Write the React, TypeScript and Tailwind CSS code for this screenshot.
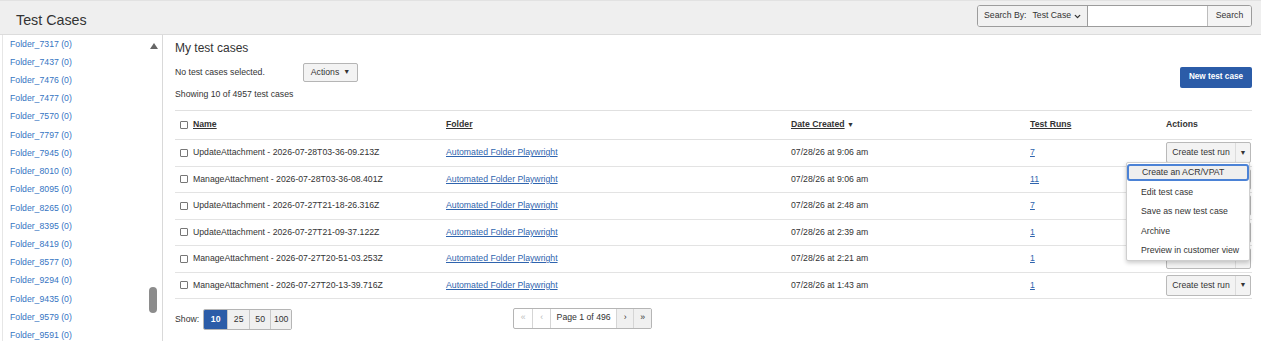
import { ChevronDown } from "lucide-react"

const folders = [
  "7317", "7437", "7476", "7477", "7570", "7797", "7945", "8010", "8095",
  "8265", "8395", "8419", "8577", "9294", "9435", "9579", "9591",
]

const rows = [
  { name: "UpdateAttachment - 2026-07-28T03-36-09.213Z", date: "07/28/26 at 9:06 am", runs: "7" },
  { name: "ManageAttachment - 2026-07-28T03-36-08.401Z", date: "07/28/26 at 9:06 am", runs: "11" },
  { name: "UpdateAttachment - 2026-07-27T21-18-26.316Z", date: "07/28/26 at 2:48 am", runs: "7" },
  { name: "UpdateAttachment - 2026-07-27T21-09-37.122Z", date: "07/28/26 at 2:39 am", runs: "1" },
  { name: "ManageAttachment - 2026-07-27T20-51-03.253Z", date: "07/28/26 at 2:21 am", runs: "1" },
  { name: "ManageAttachment - 2026-07-27T20-13-39.716Z", date: "07/28/26 at 1:43 am", runs: "1" },
]

const cols = "grid grid-cols-[265px_345px_239px_136px_92px]"

function Checkbox() {
  return <span className="inline-block w-[8px] h-[8px] border border-[#777] rounded-[1px] bg-white shrink-0" />
}

function CreateRunButton({ open }: { open?: boolean }) {
  return (
    <div className="relative flex h-[21px] w-[85px] border border-[#b9b9b9] rounded-[2px] bg-[#f3f3f3]">
      <span className="flex-1 flex items-center justify-center">Create test run</span>
      <span className="w-[15px] flex items-center justify-center border-l border-[#dcdcdc] text-[7px]">▼</span>
      {open && <ActionsMenu />}
    </div>
  )
}

function ActionsMenu() {
  return (
    <div className="absolute right-0 top-full z-10 w-[124px] h-[99px] bg-white border border-[#cfcfcf] rounded-[2px] shadow-[0_2px_4px_rgba(0,0,0,0.2)]">
      <div className="h-[17px] mt-[1px] flex items-center pl-[13px] bg-[#efefef] border-2 border-[#4b82d6] rounded-[3px]">
        Create an ACR/VPAT
      </div>
      <div className="h-[19.6px] mt-[1px] flex items-center pl-[14px]">Edit test case</div>
      <div className="h-[19.6px] flex items-center pl-[14px]">Save as new test case</div>
      <div className="h-[19.6px] flex items-center pl-[14px]">Archive</div>
      <div className="h-[19.6px] flex items-center pl-[14px]">Preview in customer view</div>
    </div>
  )
}

export default function App() {
  return (
    <div className="w-[1261px] h-[341px] overflow-hidden bg-white text-[#333] text-[8.7px] font-['Liberation_Sans',Arial,sans-serif]">
      {/* header */}
      <div className="h-[35px] bg-[#efefef] border-t border-t-[#e2e2e2] border-b border-[#dcdcdc] flex items-start justify-between pl-[16px] pr-[9px]">
        <div className="text-[14.3px] mt-[11px] leading-[16px] text-[#333]">Test Cases</div>
        <div className="mt-[4px] flex h-[22px] border border-[#9c9c9c] rounded-[3px] overflow-hidden bg-white">
          <div className="w-[110px] flex items-center bg-[#f1f1f1] pl-[6px] border-r border-[#9c9c9c]">
            <span>Search By:</span>
            <span className="ml-[6px]">Test Case</span>
            <ChevronDown className="w-[9px] h-[9px] ml-[2px]" strokeWidth={3.5} />
          </div>
          <div className="w-[119px]" />
          <div className="w-[44px] flex items-center justify-center bg-[#f4f4f4] border-l border-[#bdbdbd]">Search</div>
        </div>
      </div>

      <div className="flex h-[306px]">
        {/* sidebar */}
        <div className="relative w-[161px] ml-[2px] border-l border-[#e6e6e6] border-r border-r-[#d9d9d9] overflow-hidden shrink-0">
          {folders.map((f) => (
            <div key={f} className="h-[18.23px] flex items-center pl-[7px] text-[#3574c2]">
              Folder_{f} (0)
            </div>
          ))}
          <div className="absolute left-[147px] top-[8px] w-0 h-0 border-l-[4px] border-r-[4px] border-b-[6px] border-l-transparent border-r-transparent border-b-[#666]" />
          <div className="absolute left-[146px] top-[252px] w-[8px] h-[26px] rounded-full bg-[#8c8c8c]" />
        </div>

        {/* main */}
        <div className="flex-1 pl-[12px] pr-[9px]">
          <div className="flex justify-between">
            <div>
              <div className="text-[12px] leading-[14px] mt-[6px]">My test cases</div>
              <div className="flex items-center mt-[8px] h-[19px]">
                <span className="w-[128px]">No test cases selected.</span>
                <div className="w-[55px] h-[19px] flex items-center justify-center gap-[4px] bg-[#f3f3f3] border border-[#b5b5b5] rounded-[2px]">
                  Actions <span className="text-[7px]">▼</span>
                </div>
              </div>
              <div className="mt-[6px] leading-[12px]">Showing 10 of 4957 test cases</div>
            </div>
            <div className="mt-[32px] w-[72px] h-[21px] flex items-center justify-center bg-[#2b5ca8] text-white font-bold text-[8.2px] rounded-[2px]">
              New test case
            </div>
          </div>

          {/* table */}
          <div className="mt-[10px]">
            <div className={`${cols} h-[30px] border-t border-b border-[#e0e0e0] items-center font-bold`}>
              <div className="flex items-center gap-[5px] pl-[5px]">
                <Checkbox />
                <span className="underline">Name</span>
              </div>
              <div className="pl-[6px] underline">Folder</div>
              <div className="pl-[6px]">
                <span className="underline">Date Created</span> <span className="text-[7px]">▼</span>
              </div>
              <div className="pl-[6px] underline">Test Runs</div>
              <div className="pl-[6px]">Actions</div>
            </div>
            {rows.map((r, i) => (
              <div key={i} className={`${cols} h-[26.5px] border-b border-[#e3e3e3] items-center`}>
                <div className="flex items-center gap-[5px] pl-[5px]">
                  <Checkbox />
                  <span>{r.name}</span>
                </div>
                <div className="pl-[6px] underline text-[#2f64ae]">Automated Folder Playwright</div>
                <div className="pl-[6px]">{r.date}</div>
                <div className="pl-[6px] underline text-[#2f64ae]">{r.runs}</div>
                <div className="pl-[6px]">
                  <CreateRunButton open={i === 0} />
                </div>
              </div>
            ))}
          </div>

          {/* footer */}
          <div className="flex items-center mt-[10px]">
            <span>Show:</span>
            <div className="ml-[4px] flex h-[21px] border border-[#b5b5b5] rounded-[2px] overflow-hidden">
              <span className="w-[23px] flex items-center justify-center bg-[#2b5ca8] text-white font-bold">10</span>
              <span className="w-[22px] flex items-center justify-center bg-[#f0f0f0] border-l border-[#c8c8c8]">25</span>
              <span className="w-[21px] flex items-center justify-center bg-[#f0f0f0] border-l border-[#c8c8c8]">50</span>
              <span className="w-[21px] flex items-center justify-center bg-[#f0f0f0] border-l border-[#c8c8c8]">100</span>
            </div>
            <div className="ml-[221px] -mt-[3px] flex h-[21px] border border-[#b5b5b5] rounded-[2px] overflow-hidden">
              <span className="w-[18px] flex items-center justify-center text-[#bbb]">«</span>
              <span className="w-[18px] flex items-center justify-center text-[#bbb] border-l border-[#d5d5d5]">‹</span>
              <span className="w-[66px] flex items-center justify-center border-l border-[#d5d5d5]">Page 1 of 496</span>
              <span className="w-[17px] flex items-center justify-center bg-[#f0f0f0] border-l border-[#d5d5d5]">›</span>
              <span className="w-[18px] flex items-center justify-center bg-[#f0f0f0] border-l border-[#d5d5d5]">»</span>
            </div>
          </div>
        </div>
      </div>
    </div>
  )
}
